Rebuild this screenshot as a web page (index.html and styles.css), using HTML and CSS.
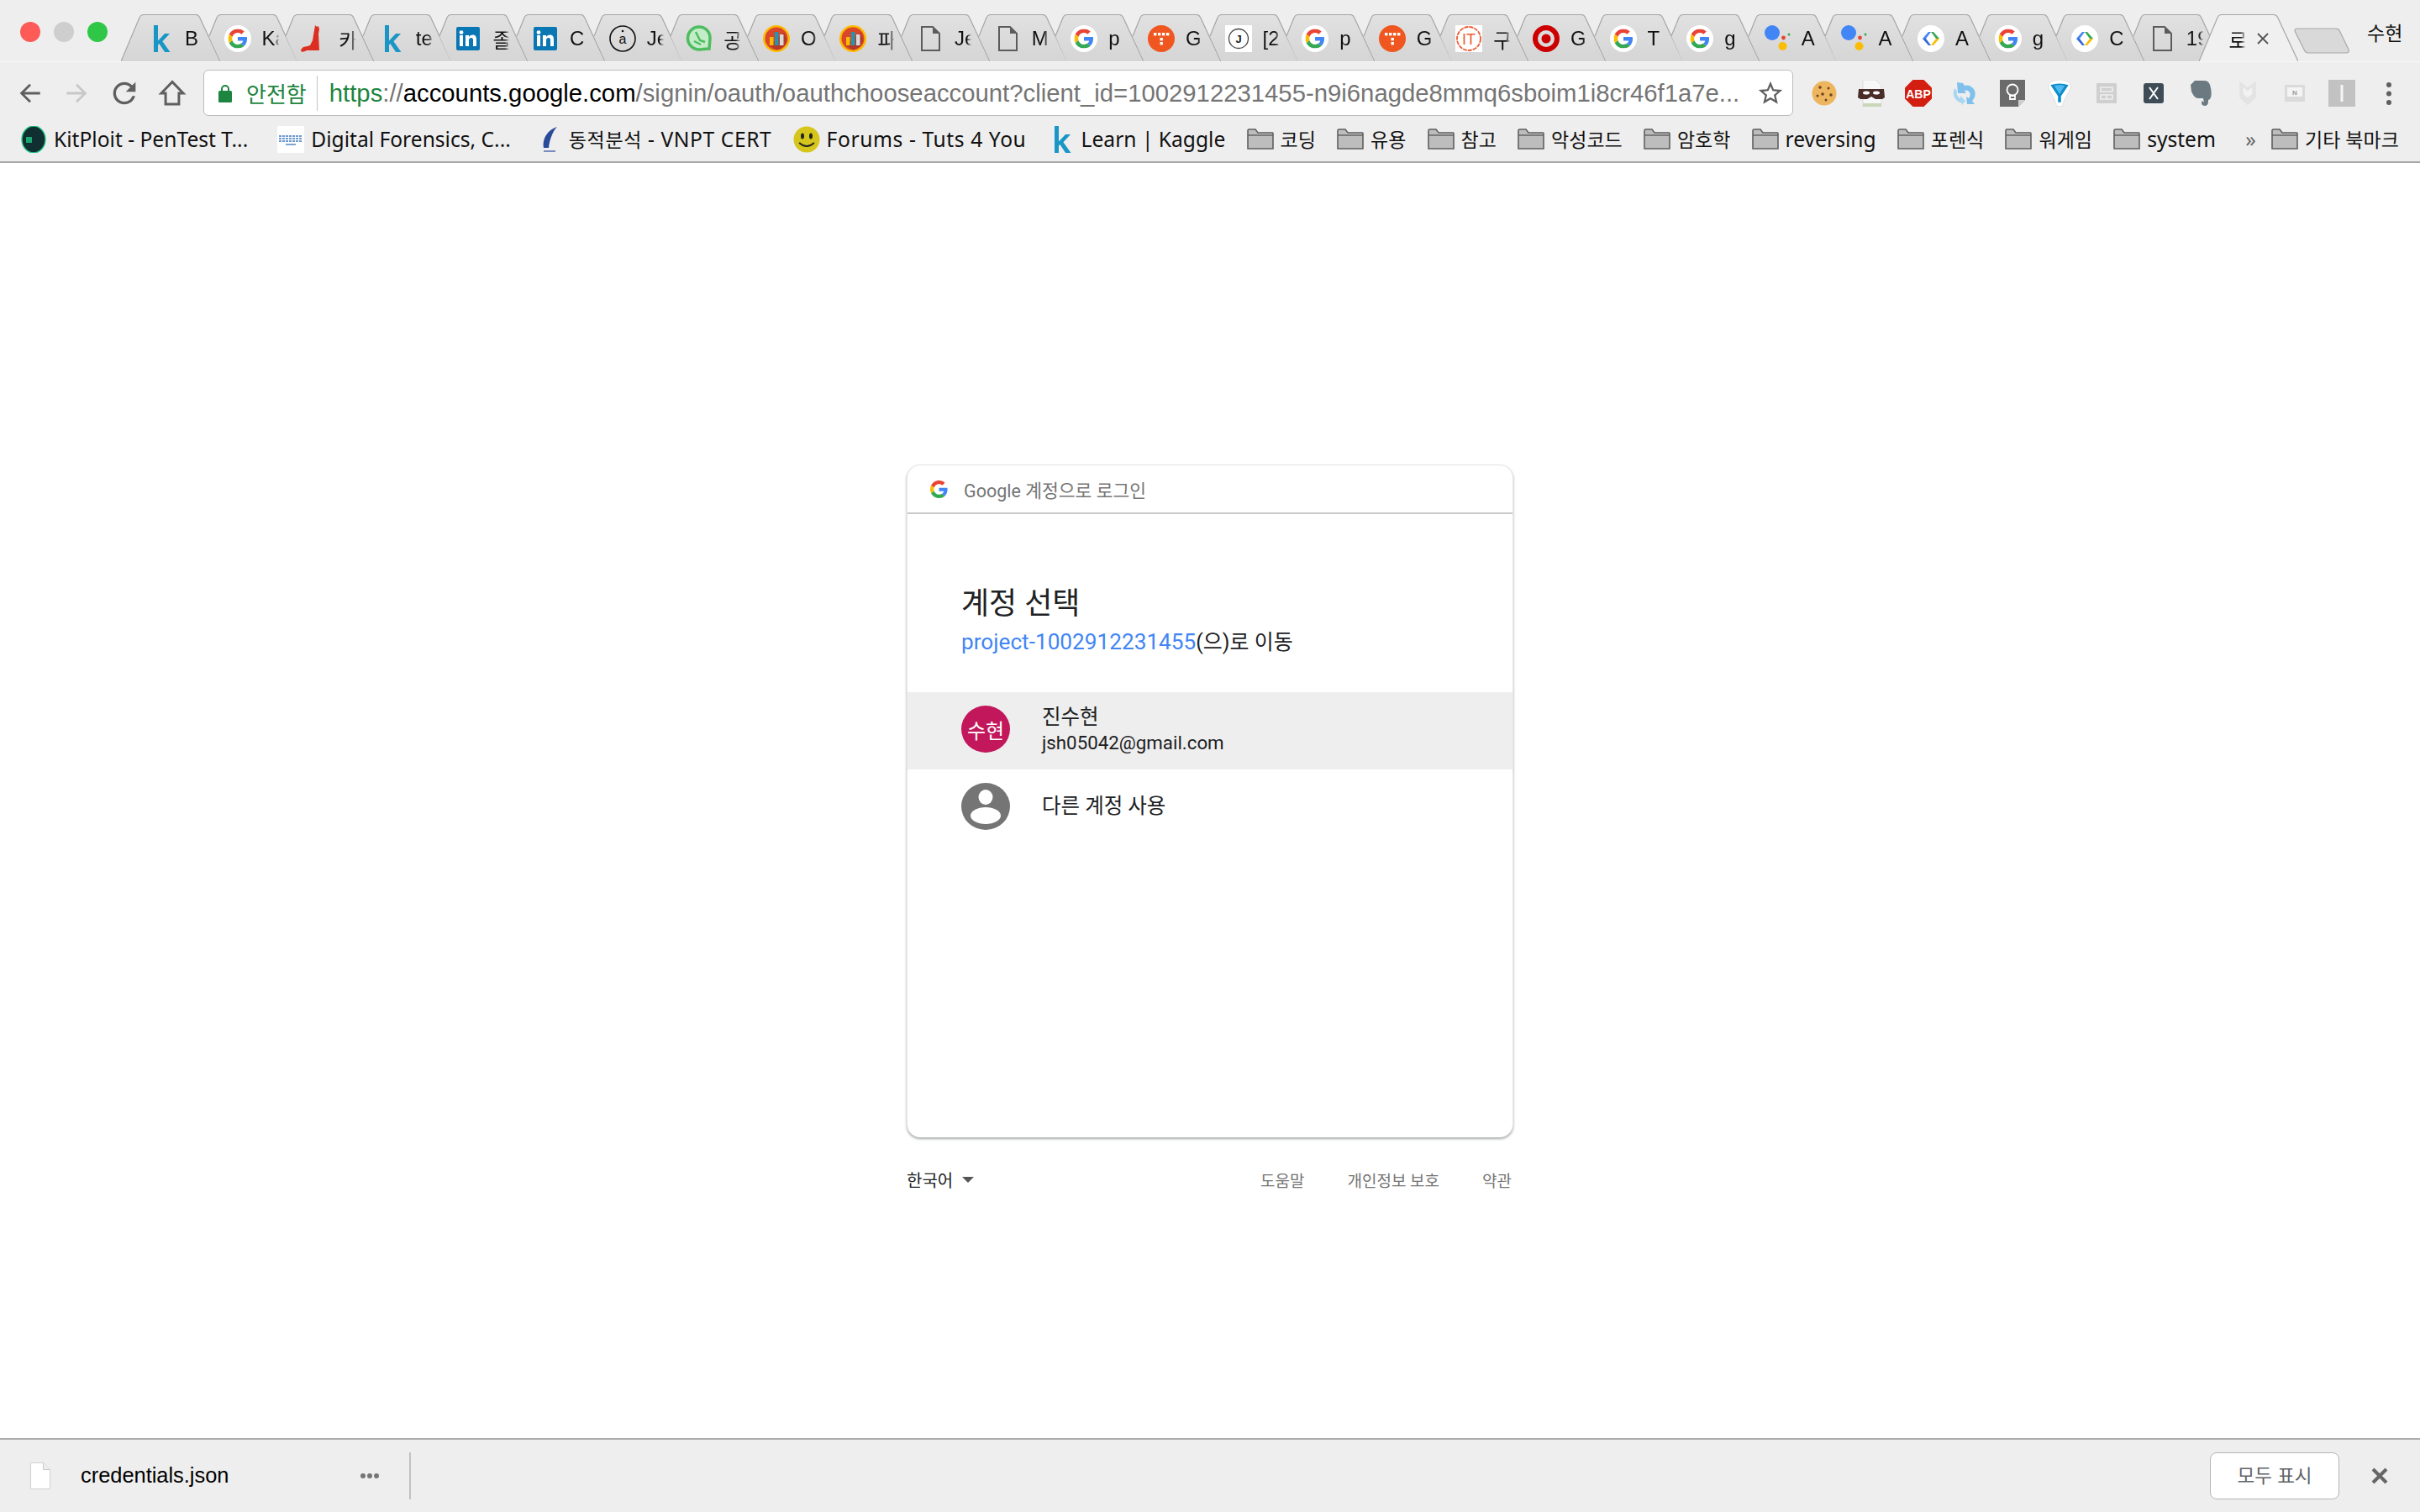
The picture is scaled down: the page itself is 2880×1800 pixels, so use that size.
FILE: index.html
```html
<!DOCTYPE html>
<html lang="ko">
<head>
  <meta charset="UTF-8">
  <title>로그인 - Google 계정</title>
  <link rel="stylesheet" href="styles.css">
</head>
<body>

  <!-- shared shapes for tabs, favicons and folders -->
  <svg class="defs" width="0" height="0">
    <defs>
      <linearGradient id="tabFill" x1="0" y1="0" x2="0" y2="1">
        <stop offset="0" stop-color="#e1e1e1"/>
        <stop offset="1" stop-color="#d5d5d5"/>
      </linearGradient>
    </defs>
    <symbol id="tab-shape" viewBox="0 0 118 56">
      <path d="M13 26L22 4Q23.5 .5 27 .5H89Q92 .5 93.5 3.5L118 56H26.4L13 26Z" fill="url(#tabFill)"/>
      <path d="M13 26L22 4Q23.5 .5 27 .5H89Q92 .5 93.5 3.5L118 56" fill="none" stroke="#a6a6a6" stroke-width="1.2"/>
    </symbol>
    <symbol id="tab-shape-first" viewBox="0 0 118 56">
      <path d="M0 56L22 4Q23.5 .5 27 .5H89Q92 .5 93.5 3.5L118 56Z" fill="url(#tabFill)"/>
      <path d="M0 56L22 4Q23.5 .5 27 .5H89Q92 .5 93.5 3.5L118 56" fill="none" stroke="#a6a6a6" stroke-width="1.2"/>
    </symbol>
    <symbol id="tab-shape-active" viewBox="0 0 118 56">
      <path d="M0 56L22 4Q23.5 .5 27 .5H89Q92 .5 93.5 3.5L118 56Z" fill="#f0f0f0"/>
      <path d="M0 56L22 4Q23.5 .5 27 .5H89Q92 .5 93.5 3.5L118 56" fill="none" stroke="#a6a6a6" stroke-width="1.2"/>
    </symbol>

    <symbol id="g-logo" viewBox="0 0 48 48">
      <path fill="#EA4335" d="M24 9.5c3.54 0 6.71 1.22 9.21 3.6l6.85-6.85C35.9 2.38 30.47 0 24 0 14.62 0 6.51 5.38 2.56 13.22l7.98 6.19C12.43 13.72 17.74 9.5 24 9.5z"/>
      <path fill="#4285F4" d="M46.98 24.55c0-1.57-.15-3.09-.38-4.55H24v9.02h12.94c-.58 2.96-2.26 5.48-4.78 7.18l7.73 6c4.51-4.18 7.09-10.36 7.09-17.65z"/>
      <path fill="#FBBC05" d="M10.53 28.59c-.48-1.45-.76-2.99-.76-4.59s.27-3.14.76-4.59l-7.98-6.19C.92 16.46 0 20.12 0 24c0 3.88.92 7.54 2.56 10.78l7.97-6.19z"/>
      <path fill="#34A853" d="M24 48c6.48 0 11.93-2.13 15.89-5.81l-7.73-6c-2.15 1.45-4.92 2.3-8.16 2.3-6.26 0-11.57-4.22-13.47-9.91l-7.98 6.19C6.51 42.62 14.62 48 24 48z"/>
    </symbol>
    <symbol id="fav-g" viewBox="0 0 32 32">
      <circle cx="16" cy="16" r="16" fill="#fff"/>
      <use href="#g-logo" x="4.5" y="4.5" width="23" height="23"/>
    </symbol>
    <symbol id="fav-k" viewBox="0 0 32 32">
      <path d="M8 0h5v18.6L21 10h6l-8.600 9.200L27.500 32h-6.400l-6.700-10-1.400 1.400V32H8z" fill="#1a96c6"/>
    </symbol>
    <symbol id="fav-cat" viewBox="0 0 32 32">
      <path d="M17 0l2 2 2-1 1 4-1 5 1 20H7l-2 1-4 1L0 29l3-3 5-1 3-1 3-6 1-6z" fill="#dc2f22"/>
    </symbol>
    <symbol id="fav-in" viewBox="0 0 32 32">
      <rect width="28" height="28" x="2" y="2" rx="2" fill="#0a77b5"/>
      <rect x="6" y="12" width="4" height="13" fill="#fff"/>
      <circle cx="8" cy="8.6" r="2.4" fill="#fff"/>
      <path d="M13 12h4v2c1-1.5 2.400-2.400 4.400-2.400 3.400 0 4.600 2.200 4.600 5.400v8h-4v-7.200c0-1.800-.6-2.800-2.200-2.800-1.800 0-2.800 1.200-2.800 3v7h-4z" fill="#fff"/>
    </symbol>
    <symbol id="fav-green" viewBox="0 0 32 32">
      <path d="M16 2a13 13 0 0 1 13 13c0 3-1 12-1 13-1 0-9 1-12 1A13.500 13.500 0 0 1 16 2z" fill="#c4ecc9" stroke="#4dbd5f" stroke-width="3.500"/>
      <path d="M12 8l5 10 6 2M10 19l8 4" fill="none" stroke="#4dbd5f" stroke-width="2.500"/>
    </symbol>
    <symbol id="fav-chart" viewBox="0 0 32 32">
      <circle cx="16" cy="16" r="16" fill="#fdb900"/>
      <circle cx="16" cy="16" r="13.500" fill="#d9462a"/>
      <path d="M25 8.500l3 8A13.500 13.500 0 0 1 16 29.500L8 24z" fill="#b23a27"/>
      <rect x="8" y="14" width="4.500" height="10" fill="#fdb900"/>
      <rect x="14" y="8" width="4.500" height="16" fill="#2395b0"/>
      <rect x="20" y="11" width="4.500" height="13" fill="#d9d9d9"/>
    </symbol>
    <symbol id="fav-doc" viewBox="0 0 32 32">
      <path d="M6 2h13l8 8v20H6z" fill="none" stroke="#5c5c5c" stroke-width="2"/>
      <path d="M19 2v8h8z" fill="#5c5c5c"/>
    </symbol>
    <symbol id="fav-t" viewBox="0 0 32 32">
      <circle cx="16" cy="16" r="16" fill="#f0561f"/>
      <g fill="#fff">
        <rect x="7" y="9" width="3.400" height="3.400"/><rect x="12" y="9" width="3.400" height="3.400"/>
        <rect x="17" y="9" width="3.400" height="3.400"/><rect x="22" y="9" width="3.400" height="3.400"/>
        <rect x="14.500" y="15" width="3.400" height="3.400"/><rect x="14.500" y="20" width="3.400" height="3.400"/>
      </g>
    </symbol>
    <symbol id="fav-target" viewBox="0 0 32 32">
      <circle cx="16" cy="16" r="13" fill="none" stroke="#cc0000" stroke-width="6"/>
      <circle cx="16" cy="16" r="5.500" fill="#cc0000"/>
    </symbol>
    <symbol id="fav-assistant" viewBox="0 0 32 32">
      <circle cx="10" cy="9" r="9" fill="#4285f4"/>
      <circle cx="23.500" cy="15" r="2.400" fill="#ea4335"/>
      <circle cx="22.500" cy="25" r="5" fill="#fbbc05"/>
      <circle cx="30" cy="11" r="1.500" fill="#34a853"/>
    </symbol>
    <symbol id="fav-code" viewBox="0 0 32 32">
      <circle cx="16" cy="16" r="16" fill="#fff"/>
      <path d="M13 8l-7 8 4 0 6-8z" fill="#4285f4"/>
      <path d="M6 16l7 8h3l-6-8z" fill="#3367d6"/>
      <path d="M19 8l7 8-4 0-6-8z" fill="#34a853"/>
      <path d="M26 16l-7 8h-3l6-8z" fill="#fbbc05"/>
    </symbol>
    <symbol id="folder" viewBox="0 0 32 25">
      <path d="M1 24V2.500Q1 1 2.500 1H10l3 4h17.500Q31 5 31 6v18z" fill="#bdbdbd" stroke="#5f5f5f" stroke-width="1.600"/>
      <path d="M1 8h30" stroke="#5f5f5f" stroke-width="1.400"/>
    </symbol>
  </svg>

  <header class="chrome">
    <div class="tabstrip">
      <div class="lights">
        <span class="light light-red"></span>
        <span class="light light-gray"></span>
        <span class="light light-green"></span>
      </div>

      <div class="tabs">
        <div class="tab"><svg class="tab-bg"><use href="#tab-shape-first"/></svg><div class="tab-in"><svg class="fav"><use href="#fav-k"/></svg><span class="tab-title">B</span></div></div>
        <div class="tab"><svg class="tab-bg"><use href="#tab-shape"/></svg><div class="tab-in"><svg class="fav"><use href="#fav-g"/></svg><span class="tab-title">Ka</span></div></div>
        <div class="tab"><svg class="tab-bg"><use href="#tab-shape"/></svg><div class="tab-in"><svg class="fav"><use href="#fav-cat"/></svg><span class="tab-title">카</span></div></div>
        <div class="tab"><svg class="tab-bg"><use href="#tab-shape"/></svg><div class="tab-in"><svg class="fav"><use href="#fav-k"/></svg><span class="tab-title">te</span></div></div>
        <div class="tab"><svg class="tab-bg"><use href="#tab-shape"/></svg><div class="tab-in"><svg class="fav"><use href="#fav-in"/></svg><span class="tab-title">졸</span></div></div>
        <div class="tab"><svg class="tab-bg"><use href="#tab-shape"/></svg><div class="tab-in"><svg class="fav"><use href="#fav-in"/></svg><span class="tab-title">C</span></div></div>
        <div class="tab"><svg class="tab-bg"><use href="#tab-shape"/></svg><div class="tab-in"><svg class="fav" viewBox="0 0 32 32"><circle cx="16" cy="16" r="15" fill="none" stroke="#111" stroke-width="1.600"/><circle cx="16" cy="7" r="1.300" fill="#111"/><text x="16" y="22" text-anchor="middle" class="fav-a-text">a</text></svg><span class="tab-title">Je</span></div></div>
        <div class="tab"><svg class="tab-bg"><use href="#tab-shape"/></svg><div class="tab-in"><svg class="fav"><use href="#fav-green"/></svg><span class="tab-title">공</span></div></div>
        <div class="tab"><svg class="tab-bg"><use href="#tab-shape"/></svg><div class="tab-in"><svg class="fav"><use href="#fav-chart"/></svg><span class="tab-title">O</span></div></div>
        <div class="tab"><svg class="tab-bg"><use href="#tab-shape"/></svg><div class="tab-in"><svg class="fav"><use href="#fav-chart"/></svg><span class="tab-title">파</span></div></div>
        <div class="tab"><svg class="tab-bg"><use href="#tab-shape"/></svg><div class="tab-in"><svg class="fav"><use href="#fav-doc"/></svg><span class="tab-title">Je</span></div></div>
        <div class="tab"><svg class="tab-bg"><use href="#tab-shape"/></svg><div class="tab-in"><svg class="fav"><use href="#fav-doc"/></svg><span class="tab-title">M</span></div></div>
        <div class="tab"><svg class="tab-bg"><use href="#tab-shape"/></svg><div class="tab-in"><svg class="fav"><use href="#fav-g"/></svg><span class="tab-title">p</span></div></div>
        <div class="tab"><svg class="tab-bg"><use href="#tab-shape"/></svg><div class="tab-in"><svg class="fav"><use href="#fav-t"/></svg><span class="tab-title">G</span></div></div>
        <div class="tab"><svg class="tab-bg"><use href="#tab-shape"/></svg><div class="tab-in"><svg class="fav" viewBox="0 0 32 32"><rect width="32" height="32" fill="#fff"/><circle cx="16" cy="16" r="11.500" fill="none" stroke="#444" stroke-width="1.300"/><text x="16" y="21" text-anchor="middle" class="fav-j-text">J</text></svg><span class="tab-title">[2</span></div></div>
        <div class="tab"><svg class="tab-bg"><use href="#tab-shape"/></svg><div class="tab-in"><svg class="fav"><use href="#fav-g"/></svg><span class="tab-title">p</span></div></div>
        <div class="tab"><svg class="tab-bg"><use href="#tab-shape"/></svg><div class="tab-in"><svg class="fav"><use href="#fav-t"/></svg><span class="tab-title">G</span></div></div>
        <div class="tab"><svg class="tab-bg"><use href="#tab-shape"/></svg><div class="tab-in"><svg class="fav" viewBox="0 0 32 32"><rect width="32" height="32" fill="#fff"/><circle cx="16" cy="16" r="14" fill="none" stroke="#ee5a32" stroke-width="1.800" stroke-dasharray="5 1"/><text x="16" y="22.500" text-anchor="middle" class="fav-it-text">IT</text></svg><span class="tab-title">구</span></div></div>
        <div class="tab"><svg class="tab-bg"><use href="#tab-shape"/></svg><div class="tab-in"><svg class="fav"><use href="#fav-target"/></svg><span class="tab-title">G</span></div></div>
        <div class="tab"><svg class="tab-bg"><use href="#tab-shape"/></svg><div class="tab-in"><svg class="fav"><use href="#fav-g"/></svg><span class="tab-title">T</span></div></div>
        <div class="tab"><svg class="tab-bg"><use href="#tab-shape"/></svg><div class="tab-in"><svg class="fav"><use href="#fav-g"/></svg><span class="tab-title">g</span></div></div>
        <div class="tab"><svg class="tab-bg"><use href="#tab-shape"/></svg><div class="tab-in"><svg class="fav"><use href="#fav-assistant"/></svg><span class="tab-title">A</span></div></div>
        <div class="tab"><svg class="tab-bg"><use href="#tab-shape"/></svg><div class="tab-in"><svg class="fav"><use href="#fav-assistant"/></svg><span class="tab-title">A</span></div></div>
        <div class="tab"><svg class="tab-bg"><use href="#tab-shape"/></svg><div class="tab-in"><svg class="fav"><use href="#fav-code"/></svg><span class="tab-title">A</span></div></div>
        <div class="tab"><svg class="tab-bg"><use href="#tab-shape"/></svg><div class="tab-in"><svg class="fav"><use href="#fav-g"/></svg><span class="tab-title">g</span></div></div>
        <div class="tab"><svg class="tab-bg"><use href="#tab-shape"/></svg><div class="tab-in"><svg class="fav"><use href="#fav-code"/></svg><span class="tab-title">C</span></div></div>
        <div class="tab"><svg class="tab-bg"><use href="#tab-shape"/></svg><div class="tab-in"><svg class="fav"><use href="#fav-doc"/></svg><span class="tab-title">19</span></div></div>
        <div class="tab tab-active"><svg class="tab-bg"><use href="#tab-shape-active"/></svg><div class="tab-in"><span class="tab-title">로</span><svg class="tab-close" viewBox="0 0 14 14"><path d="M1 1l12 12M13 1L1 13" stroke="#555" stroke-width="1.800"/></svg></div></div>
      </div>

      <svg class="newtab" viewBox="0 0 66 31"><path d="M5 1H50Q53 1 54.500 4L65 26Q66.500 30 62 30H17Q14 30 12.500 27L1.500 5Q0 1 5 1Z" fill="#d9d9d9" stroke="#a9a9a9" stroke-width="1.200"/></svg>
      <span class="profile">수현</span>
    </div>

    <div class="toolbar">
      <button class="tool-btn"><svg viewBox="0 0 24 24" class="tool-icon"><path fill="#5f5f5f" d="M21 11H7.830l5.590-5.590L12 4l-8 8 8 8 1.410-1.410L7.830 13H21v-2z"/></svg></button>
      <button class="tool-btn"><svg viewBox="0 0 24 24" class="tool-icon"><path fill="#c8c8c8" d="M3 11h13.170l-5.590-5.590L12 4l8 8-8 8-1.410-1.410L16.170 13H3v-2z"/></svg></button>
      <button class="tool-btn"><svg viewBox="0 0 24 24" class="tool-icon tool-reload"><path fill="#5f5f5f" d="M17.650 6.350A7.958 7.958 0 0 0 12 4c-4.420 0-7.990 3.580-7.990 8s3.570 8 7.990 8c3.730 0 6.840-2.550 7.730-6h-2.080A5.990 5.990 0 0 1 12 18c-3.310 0-6-2.690-6-6s2.690-6 6-6c1.660 0 3.140.69 4.220 1.780L13 11h7V4l-2.350 2.350z"/></svg></button>
      <button class="tool-btn"><svg viewBox="0 0 28 30" class="tool-icon"><path fill="none" stroke="#5f5f5f" stroke-width="2.600" d="M14 3L2.500 15H7v11.500h14V15h4.500z"/></svg></button>

      <div class="omnibox">
        <svg class="lock" viewBox="0 0 16 22"><path d="M4 9V6a4 4 0 0 1 8 0v3" fill="none" stroke="#1e8540" stroke-width="2"/><rect y="8" width="16" height="14" rx="1.500" fill="#1e8540"/></svg>
        <span class="secure">안전함</span>
        <span class="omni-line"></span>
        <span class="url"><span class="url-https">https</span>://<span class="url-host">accounts.google.com</span>/signin/oauth/oauthchooseaccount?client_id=1002912231455-n9i6nagde8mmq6sboim1i8cr46f1a7e...</span>
        <svg class="star" viewBox="0 0 24 24"><path fill="#5f5f5f" d="M22 9.240l-7.190-.62L12 2 9.190 8.630 2 9.240l5.460 4.730L5.820 21 12 17.270 18.180 21l-1.630-7.030L22 9.240zM12 15.400l-3.760 2.270 1-4.280-3.320-2.880 4.380-.38L12 6.100l1.710 4.040 4.380.38-3.320 2.880 1 4.280L12 15.400z"/></svg>
      </div>

      <div class="extensions">
        <span class="ext"><svg viewBox="0 0 32 32"><circle cx="16" cy="16" r="14.500" fill="#eeb55f"/><g fill="#6b4320"><circle cx="11" cy="9" r="1.800"/><circle cx="21" cy="10" r="1.500"/><circle cx="14" cy="17" r="1.800"/><circle cx="24" cy="18" r="1.800"/><circle cx="8" cy="19" r="1.500"/><circle cx="18" cy="24" r="1.500"/></g></svg></span>
        <span class="ext"><svg viewBox="0 0 32 32"><path d="M6 0h15l7 7v25H6z" fill="#f7f7f7" stroke="#ddd"/><path d="M6 28h22v4H6z" fill="#c9d6b8"/><path d="M1 11h30l1 10-3 2H21l-5-3-5 3H3l-3-2z" fill="#4a2c29"/><ellipse cx="10" cy="15.500" rx="4" ry="2" fill="#fff"/><ellipse cx="22" cy="15.500" rx="4" ry="2" fill="#fff"/></svg></span>
        <span class="ext"><svg viewBox="0 0 32 32"><path d="M9.500 0h13L32 9.500v13L22.500 32h-13L0 22.500v-13z" fill="#d21f11"/><text x="16" y="21.500" text-anchor="middle" class="abp-text">ABP</text></svg></span>
        <span class="ext"><svg viewBox="0 0 32 32"><path d="M6 3l7 1 2 3a10 10 0 0 1 12 6c2 6-1 10-3 12l3 4h-9l-1-9 3 2c2-2 2-5 1-7s-4-3-6-2l2 3H7z" fill="#7fc0ec"/><path d="M3 10c-3 6-1 15 9 18l-1 3 5-6-6-6v3c-4-2-5-6-4-9z" fill="#a7d6f3"/></svg></span>
        <span class="ext"><svg viewBox="0 0 32 32"><path d="M1 0h30v24l-8 8H1z" fill="#6b6b6b"/><path d="M23 32l8-8h-8z" fill="#cfcfcf"/><circle cx="16" cy="12" r="6.500" fill="none" stroke="#fff" stroke-width="1.800"/><path d="M13 19h6v4h-6z" fill="none" stroke="#fff" stroke-width="1.800"/></svg></span>
        <span class="ext"><svg viewBox="0 0 32 36"><path d="M1 9C1 3 8 0 16 0s15 3 15 9c0 5-9 15-11 26-2 1-6 1-8 0C10 24 1 14 1 9z" fill="#fff" stroke="#dcdcdc"/><path d="M4 7q12-4 24 0L18 22v8h-4v-8z" fill="#0f8ccc"/><path d="M9 8q7-2 14 0l-7 11z" fill="#4dbbee"/></svg></span>
        <span class="ext"><svg viewBox="0 0 32 32"><rect x="4" y="4" width="24" height="24" rx="1" fill="#cfcfcf"/><path d="M9 9h14v5H9zM9 18h14v5H9zM16 18v5" fill="none" stroke="#efefef" stroke-width="1.600"/></svg></span>
        <span class="ext"><svg viewBox="0 0 32 32"><rect x="4" y="4" width="24" height="24" rx="3" fill="#3d4c57"/><path d="M11 9l10 14M21 9L11 23" stroke="#fff" stroke-width="2"/></svg></span>
        <span class="ext"><svg viewBox="0 0 32 32"><path d="M4 6l5-5h11c5 0 7 3 8 9 1 5 1 10-1 13l-2 1c0 3 0 7-4 7s-5-4-3-6l2 2-1-5H13c-4 0-6-4-8-8z" fill="#6a7a80"/></svg></span>
        <span class="ext"><svg viewBox="0 0 32 36"><path d="M5 2l11 8 11-8v22l-11 10L5 24z" fill="#e3e3e3"/><path d="M10 10l6 5 6-5v9l-6 5-6-5z" fill="#f2f2f2"/></svg></span>
        <span class="ext"><svg viewBox="0 0 32 32"><rect x="4" y="6" width="24" height="20" fill="#dadada"/><rect x="7" y="9" width="18" height="11" fill="#f4f4f4"/><text x="16" y="18" text-anchor="middle" class="n-text">N</text></svg></span>
        <span class="ext"><svg viewBox="0 0 32 32"><rect width="32" height="32" fill="#c2c2c2"/><rect x="14.500" y="6" width="3" height="20" fill="#f5f5f5"/></svg></span>
        <span class="ext"><svg viewBox="0 0 32 32"><g fill="#5f5f5f"><circle cx="16" cy="6" r="3"/><circle cx="16" cy="16.500" r="3"/><circle cx="16" cy="27" r="3"/></g></svg></span>
      </div>
    </div>

    <nav class="bookmarks">
      <a class="bm bm-kit"><svg class="bm-icon" viewBox="0 0 32 32"><ellipse cx="16" cy="16" rx="14" ry="16" fill="#0f2f30" stroke="#22c98b" stroke-width="1.400"/><rect x="7" y="13" width="7" height="7" fill="#18a873"/></svg>KitPloit - PenTest T...</a>
      <a class="bm bm-dig"><svg class="bm-icon" viewBox="0 0 32 32"><rect width="32" height="32" fill="#fff"/><path d="M2 12h28M2 15h28M2 18h28" stroke="#6f9bd0" stroke-width="2" stroke-dasharray="3 1"/><path d="M10 22h12" stroke="#7fa5d3" stroke-width="2"/></svg>Digital Forensics, C...</a>
      <a class="bm bm-wide"><svg class="bm-icon" viewBox="0 0 32 32"><path d="M10 26C8 14 16 4 26 1 21 6 17 16 16 26z" fill="#2a4a9a"/><path d="M10 29h14v2H10z" fill="#7b8cc0"/></svg><span><span class="ko">동적분석</span> - VNPT CERT</span></a>
      <a class="bm bm-wide"><svg class="bm-icon" viewBox="0 0 32 32"><circle cx="16" cy="16" r="15.500" fill="#d6c51a"/><ellipse cx="11" cy="12" rx="2" ry="3.500" fill="#222"/><ellipse cx="21" cy="12" rx="2" ry="3.500" fill="#222"/><path d="M7 20q9 8 18 0" fill="none" stroke="#222" stroke-width="1.800"/></svg>Forums - Tuts 4 You</a>
      <a class="bm"><svg class="bm-icon" viewBox="0 0 32 32"><use href="#fav-k"/></svg>Learn | Kaggle</a>
      <a class="bm ko"><svg class="bm-folder"><use href="#folder"/></svg>코딩</a>
      <a class="bm ko"><svg class="bm-folder"><use href="#folder"/></svg>유용</a>
      <a class="bm ko"><svg class="bm-folder"><use href="#folder"/></svg>참고</a>
      <a class="bm ko"><svg class="bm-folder"><use href="#folder"/></svg>악성코드</a>
      <a class="bm ko"><svg class="bm-folder"><use href="#folder"/></svg>암호학</a>
      <a class="bm"><svg class="bm-folder"><use href="#folder"/></svg>reversing</a>
      <a class="bm ko"><svg class="bm-folder"><use href="#folder"/></svg>포렌식</a>
      <a class="bm ko"><svg class="bm-folder"><use href="#folder"/></svg>워게임</a>
      <a class="bm"><svg class="bm-folder"><use href="#folder"/></svg>system</a>
      <span class="bm-more">»</span>
      <a class="bm ko"><svg class="bm-folder"><use href="#folder"/></svg>기타 북마크</a>
    </nav>
  </header>

  <main class="page">
    <section class="card">
      <div class="card-head">
        <svg class="card-g"><use href="#g-logo"/></svg>
        <span>Google 계정으로 로그인</span>
      </div>
      <div class="card-title">
        <h1>계정 선택</h1>
        <p><a class="app-link">project-1002912231455</a>(으)로 이동</p>
      </div>
      <ul class="accounts">
        <li class="account account-on">
          <span class="avatar">수현</span>
          <div class="account-text">
            <div class="account-name">진수현</div>
            <div class="account-mail">jsh05042@gmail.com</div>
          </div>
        </li>
        <li class="account">
          <svg class="avatar-svg" viewBox="0 0 58 56"><ellipse cx="29" cy="28" rx="29" ry="28" fill="#757575"/><ellipse cx="29" cy="17" rx="8.500" ry="9" fill="#fff"/><ellipse cx="29" cy="39" rx="18" ry="10" fill="#fff"/></svg>
          <div class="account-name">다른 계정 사용</div>
        </li>
      </ul>
    </section>

    <footer class="legal">
      <span class="lang">한국어<i class="caret"></i></span>
      <div class="legal-links">
        <a>도움말</a>
        <a>개인정보 보호</a>
        <a>약관</a>
      </div>
    </footer>
  </main>

  <div class="downloads">
    <div class="dl-item">
      <svg class="dl-file" viewBox="0 0 24 32"><path d="M.5.5h15l8 8v23H.5z" fill="#fff" stroke="#d0d0d0"/><path d="M15.500.5v8h8" fill="#eee" stroke="#c8c8c8"/></svg>
      <span class="dl-name">credentials.json</span>
      <span class="dl-dots"><i></i><i></i><i></i></span>
    </div>
    <button class="dl-all">모두 표시</button>
    <svg class="dl-close" viewBox="0 0 20 20"><path d="M2 2l16 16M18 2L2 18" stroke="#666" stroke-width="4"/></svg>
  </div>

</body>
</html>
```

FILE: styles.css
```css
* {
  box-sizing: border-box;
}

html, body {
  margin: 0;
  height: 100%;
}

body {
  width: 2880px;
  height: 1800px;
  display: flex;
  flex-direction: column;
  overflow: hidden;
  background: #fff;
  font-family: Roboto, "Noto Sans CJK KR", sans-serif;
  color: #202124;
}

.defs {
  position: absolute;
}

.fav-a-text {
  font: 16px "Liberation Sans", sans-serif;
  fill: #111;
}

.fav-j-text {
  font: bold 13px "Liberation Sans", sans-serif;
  fill: #222;
}

.fav-it-text {
  font: 18px "Liberation Sans", sans-serif;
  fill: #ee5a32;
}

.abp-text {
  font: bold 14px "Liberation Sans", sans-serif;
  fill: #fff;
}

.n-text {
  font: bold 8px "Liberation Sans", sans-serif;
  fill: #999;
}

/* window top */
.chrome {
  background: #eeeeee;
  border-bottom: 2px solid #a9a9a9;
  flex: none;
}

.tabstrip {
  height: 73px;
  display: flex;
  align-items: flex-end;
  padding-left: 24px;
}

.lights {
  display: flex;
  gap: 16px;
  width: 120px;
  align-self: flex-start;
  padding-top: 26px;
}

.light {
  width: 24px;
  height: 24px;
  border-radius: 50%;
}

.light-red { background: #fc5b57; }
.light-gray { background: #cecece; }
.light-green { background: #30c748; }

.tabs {
  display: flex;
}

.tab {
  position: relative;
  width: 118px;
  height: 56px;
  margin-right: -26.4px;
  font: 24px "Liberation Sans", "Noto Sans CJK KR", sans-serif;
  color: #111;
}

.tab-bg {
  position: absolute;
  left: 0;
  top: 0;
  width: 118px;
  height: 56px;
}

.tab-in {
  position: relative;
  display: flex;
  align-items: center;
  height: 100%;
  padding: 2px 0 0 31px;
  gap: 13px;
}

.fav {
  width: 32px;
  height: 32px;
  flex: none;
}

/* the fade stands in for the narrow tab, titles stay inside the box */
.tab-title {
  width: 24px;
  white-space: nowrap;
  overflow: hidden;
  -webkit-mask-image: linear-gradient(to right, #000 62%, transparent 85%);
  mask-image: linear-gradient(to right, #000 62%, transparent 85%);
}

.tab-active .tab-in {
  padding-left: 35px;
  gap: 10px;
}

.tab-close {
  width: 14px;
  height: 14px;
}

.newtab {
  width: 66px;
  height: 31px;
  margin-left: 21px;
  margin-bottom: 9px;
}

.profile {
  align-self: flex-start;
  margin: 22px 0 0 21px;
  font: 23px "Noto Sans CJK KR", sans-serif;
  line-height: 32px;
  color: #111;
}

/* address row */
.toolbar {
  height: 70px;
  display: flex;
  align-items: center;
  padding: 4px 0 0 7px;
  border-top: 1px solid #f8f8f8;
}

.tool-btn {
  width: 56.5px;
  height: 56px;
  padding: 0;
  border: 0;
  background: none;
  display: flex;
  align-items: center;
  justify-content: center;
}

.tool-icon {
  width: 34px;
  height: 34px;
}

.tool-reload {
  width: 40px;
  height: 40px;
}

.omnibox {
  width: 1892px;
  height: 55px;
  margin-left: 9px;
  display: flex;
  align-items: center;
  padding-left: 17px;
  background: #fff;
  border: 1px solid #bcbcbc;
  border-radius: 6px;
}

.lock {
  width: 16px;
  height: 22px;
  flex: none;
}

.secure {
  margin-left: 17px;
  font: 26px "Noto Sans CJK KR", sans-serif;
  color: #1e8540;
  line-height: 1;
}

.omni-line {
  width: 1px;
  height: 42px;
  margin: 0 14px 0 12px;
  background: #c4c4c4;
}

.url {
  flex: 1;
  font: 29.3px "Liberation Sans", sans-serif;
  color: #757575;
  white-space: nowrap;
}

.url-https {
  color: #1e8540;
}

.url-host {
  color: #000;
}

.star {
  width: 34px;
  height: 34px;
  margin-right: 9px;
}

.extensions {
  display: flex;
  margin-left: 9px;
}

.ext {
  width: 56px;
  height: 40px;
  display: flex;
  align-items: center;
  justify-content: center;
}

.ext svg {
  width: 32px;
  height: 32px;
}

/* bookmarks row */
.bookmarks {
  height: 49px;
  display: flex;
  align-items: center;
  padding: 0 0 4px 24px;
  font: 24.6px "Noto Sans", "Noto Sans CJK KR", sans-serif;
  color: #111;
  white-space: nowrap;
}

.bm {
  display: flex;
  align-items: center;
  gap: 8px;
  margin-right: 25.2px;
  line-height: 32px;
}

.ko {
  font-size: 23px;
}

.bm-kit {
  margin-right: 35px;
}

.bm-dig {
  margin-right: 29px;
}

.bm-wide {
  letter-spacing: 0.6px;
}

.bm-icon {
  width: 32px;
  height: 32px;
  flex: none;
}

.bm-folder {
  width: 32px;
  height: 25px;
  flex: none;
}

.bm-more {
  width: 30px;
  margin: 0 17px 0 9px;
  color: #666;
  text-align: center;
}

/* sign in page */
.page {
  flex: 1;
  width: 722px;
  margin: 0 auto;
  padding-top: 359px;
}

.card {
  height: 801px;
  border-radius: 16px;
  background: #fff;
  border: 1px solid #e4e4e4;
  border-bottom: 0;
  box-shadow: 0 2px 3px rgba(60, 64, 67, 0.45);
}

.card-head {
  height: 58px;
  display: flex;
  align-items: center;
  gap: 19px;
  padding-left: 27px;
  border-bottom: 2px solid #c9c9c9;
  font-size: 21.5px;
  color: #757575;
}

.card-g {
  width: 21px;
  height: 21px;
}

.card-title {
  height: 212px;
  padding: 81px 0 0 64px;
}

.card-title h1 {
  margin: 0;
  font-size: 36px;
  font-weight: 400;
  line-height: 52px;
  color: #202124;
}

.card-title p {
  margin: 0;
  font-size: 25px;
  line-height: 38px;
  color: #202124;
}

.app-link {
  font-size: 26.2px;
  color: #4285f4;
}

.accounts {
  margin: 0;
  padding: 0;
  list-style: none;
}

.account {
  height: 92px;
  display: flex;
  align-items: center;
  gap: 38px;
  padding: 0 0 4px 64px;
}

.account-on {
  background: #eeeeee;
}

.avatar {
  width: 58px;
  height: 56px;
  border-radius: 50%;
  flex: none;
  display: flex;
  align-items: center;
  justify-content: center;
  background: #c2185b;
  color: #fff;
  font-size: 24px;
}

.avatar-svg {
  width: 58px;
  height: 56px;
  flex: none;
}

.account-name {
  font-size: 24.5px;
  line-height: 32px;
  color: #202124;
}

.account-mail {
  font-size: 22.3px;
  line-height: 28px;
  color: #202124;
}

.legal {
  display: flex;
  align-items: center;
  justify-content: space-between;
  height: 24px;
  margin-top: 38px;
  font-size: 20px;
  color: #757575;
}

.lang {
  display: flex;
  align-items: center;
  gap: 11px;
  color: #202124;
}

.caret {
  width: 0;
  height: 0;
  border: 7px solid transparent;
  border-top-color: #555;
  border-bottom: 0;
}

.legal-links {
  display: flex;
  gap: 51px;
  padding-right: 2px;
  font-size: 19px;
}

/* download shelf */
.downloads {
  flex: none;
  height: 88px;
  display: flex;
  align-items: center;
  padding-left: 36px;
  background: #eeeeee;
  border-top: 2px solid #adadad;
}

.dl-item {
  width: 453px;
  height: 56px;
  display: flex;
  align-items: center;
  border-right: 2px solid #c2c2c2;
}

.dl-file {
  width: 24px;
  height: 32px;
  flex: none;
}

.dl-name {
  margin-left: 36px;
  padding-bottom: 2px;
  font: 25.4px "Liberation Sans", sans-serif;
  color: #000;
}

.dl-dots {
  display: flex;
  gap: 2px;
  margin-left: auto;
  margin-right: 36px;
}

.dl-dots i {
  width: 6px;
  height: 6px;
  border-radius: 50%;
  background: #757575;
}

.dl-all {
  width: 154px;
  height: 56px;
  margin-left: auto;
  padding: 0 0 4px;
  background: #fff;
  border: 1px solid #b5b5b5;
  border-radius: 8px;
  font: 22.5px "Noto Sans CJK KR", sans-serif;
  color: #5f6368;
}

.dl-close {
  width: 20px;
  height: 20px;
  margin: 0 38px 0 38px;
}
```
